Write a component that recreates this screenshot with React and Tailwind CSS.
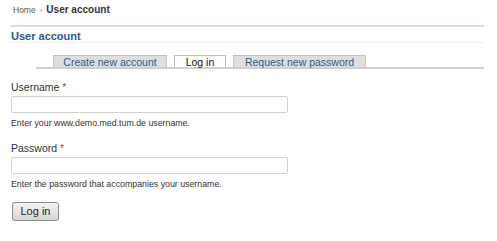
export default function App() {
  return (
    <div className="w-[497px] h-[241px] bg-white font-['Liberation_Sans',Arial,sans-serif] overflow-hidden">
      {/* breadcrumb */}
      <div className="h-[25px] pl-[13px] pt-[3px] flex items-start">
        <div className="flex items-baseline h-[14px] leading-[14px]">
          <span className="text-[8.5px] text-[#555]">Home</span>
          <span className="text-[8px] text-[#888] mx-[4px]">›</span>
          <span className="text-[10px] font-bold text-[#333]">User account</span>
        </div>
      </div>
      {/* top rule */}
      <div className="ml-[10px] w-[474px] h-[2px] bg-[#d5dde7]" />
      {/* heading */}
      <div className="ml-[10px] w-[474px] h-[16px] border-b border-[#eef1f4] pl-[1px] pt-[3px] text-[11px] leading-[12px] font-bold text-[#2b5b91]">
        User account
      </div>
      {/* tabs */}
      <div className="ml-[36px] w-[448px] mt-[12px] border-b-2 border-[#cfcfcf] flex pl-[17px] gap-[7px] h-[14px]">
        <div className="w-[114px] h-[12px] bg-[#dedede] border border-[#c4c4c4] border-b-0 text-center text-[10.5px] leading-[12px] text-[#2b5b91]">
          Create new account
        </div>
        <div className="w-[52px] h-[12px] bg-white border border-[#bdbdbd] border-b-0 text-center text-[10.5px] leading-[12px] text-[#111]">
          Log in
        </div>
        <div className="w-[133px] h-[12px] bg-[#dedede] border border-[#c4c4c4] border-b-0 text-center text-[10.5px] leading-[12px] text-[#2b5b91]">
          Request new password
        </div>
      </div>
      {/* form */}
      <div className="pl-[11px] pt-[12px] flex flex-col items-start">
        <div className="text-[10.5px] leading-[12px] text-[#333]">
          Username <span className="text-[#d03030]">*</span>
        </div>
        <div className="mt-[3px] w-[277px] h-[17px] border border-[#d2d2d2] rounded-[2px] bg-white" />
        <div className="mt-[5px] text-[8.8px] leading-[10px] text-[#333]">
          Enter your www.demo.med.tum.de username.
        </div>
        <div className="mt-[14px] text-[10.5px] leading-[12px] text-[#333]">
          Password <span className="text-[#d03030]">*</span>
        </div>
        <div className="mt-[3px] w-[277px] h-[17px] border border-[#d2d2d2] rounded-[2px] bg-white" />
        <div className="mt-[5px] text-[8.8px] leading-[10px] text-[#333]">
          Enter the password that accompanies your username.
        </div>
        <div className="mt-[13px] ml-[1px] w-[47px] h-[19px] rounded-[3px] border border-[#8d8d8d] bg-gradient-to-b from-[#f4f4f4] to-[#d6d6d6] flex items-center justify-center text-[11px] text-[#222]">
          Log in
        </div>
      </div>
    </div>
  );
}
